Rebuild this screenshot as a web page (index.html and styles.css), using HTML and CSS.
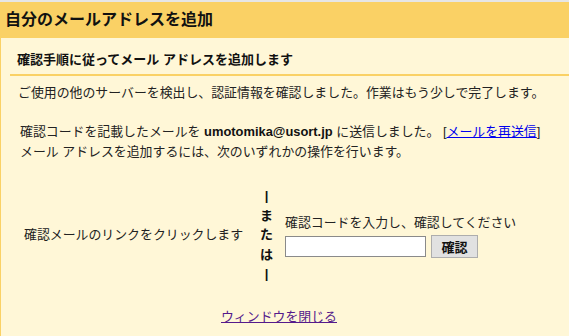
FILE: index.html
```html
<!DOCTYPE html>
<html lang="ja">
<head>
    <meta charset="UTF-8">
    <meta name="viewport" content="width=device-width, initial-scale=1.0">
    <title>自分のメールアドレスを追加</title>
    <link rel="stylesheet" href="styles.css">
</head>
<body>
    <div class="top-strip"></div>
    <div class="header">
        <h1>自分のメールアドレスを追加</h1>
    </div>

    <div class="content">
        <div class="subhead">確認手順に従ってメール アドレスを追加します</div>

        <p class="intro">ご使用の他のサーバーを検出し、認証情報を確認しました。作業はもう少しで完了します。</p>

        <div class="sent">
            <p>確認コードを記載したメールを <b>umotomika@usort.jp</b> に送信しました。 [<a href="#" class="resend">メールを再送信</a>]</p>
            <p>メール アドレスを追加するには、次のいずれかの操作を行います。</p>
        </div>

        <div class="options">
            <div class="option-link">確認メールのリンクをクリックします</div>
            <div class="or">
                <span class="bar">|</span>
                <span>ま</span>
                <span>た</span>
                <span>は</span>
                <span class="bar">|</span>
            </div>
            <div class="option-code">
                <label for="code">確認コードを入力し、確認してください</label>
                <div class="code-row">
                    <input type="text" id="code">
                    <button>確認</button>
                </div>
            </div>
        </div>

        <div class="close">
            <a href="#" class="close-link">ウィンドウを閉じる</a>
        </div>
    </div>
</body>
</html>
```

FILE: styles.css
```css
body {
    margin: 0;
    font-family: "Liberation Sans", "Noto Sans CJK JP", sans-serif;
    font-size: 12.9px;
    color: #222;
    background-color: #fff7d7;
}
.top-strip {
    height: 2px;
    background-color: #e6e6e6;
}
.header {
    height: 36px;
    background-color: #fad165;
    padding-left: 5px;
}
h1 {
    margin: 0;
    font-size: 16px;
    line-height: 36px;
    font-weight: bold;
    color: #111;
}
.content {
    border-left: 1px solid #fad165;
    min-height: 298px;
    box-sizing: border-box;
    padding-top: 12px;
}
.subhead {
    margin-left: 9px;
    padding: 0 0 4px 7px;
    line-height: 20px;
    font-size: 13px;
    font-weight: bold;
    color: #111;
    border-bottom: 2px solid #fad165;
}
.intro {
    margin: 7px 0 0;
    padding-left: 17px;
    line-height: 20px;
}
.sent {
    margin-top: 19px;
    padding-left: 19px;
}
.sent p {
    margin: 0;
    line-height: 20px;
}
.sent b {
    color: #111;
}
.resend {
    color: #0000ee;
}
.options {
    display: flex;
    align-items: center;
    margin-top: 24px;
    padding-left: 23px;
}
.option-link {
    line-height: 20px;
    width: 236px;
}
.or {
    display: flex;
    flex-direction: column;
    align-items: center;
    width: 13px;
    font-size: 13px;
    font-weight: bold;
    line-height: 19.5px;
    color: #111;
}
.option-code {
    margin-left: 12px;
    padding-top: 2px;
}
.option-code label {
    display: block;
    line-height: 18px;
    margin-bottom: 3px;
}
.code-row {
    display: flex;
    align-items: center;
    gap: 5px;
}
.code-row input {
    width: 141px;
    height: 21px;
    box-sizing: border-box;
    border: 1px solid #8a8a8a;
    background: #fff;
    margin: 0;
    padding: 1px 3px;
}
.code-row button {
    width: 47px;
    height: 23px;
    box-sizing: border-box;
    margin: 0;
    padding: 0;
    border: 1px solid #adadad;
    background-color: #e1e1e1;
    font-family: "Liberation Sans", "Noto Sans CJK JP", sans-serif;
    font-size: 13px;
    font-weight: bold;
    color: #111;
}
.close {
    margin-top: 23px;
    padding-right: 12px;
    text-align: center;
    line-height: 20px;
}
.close-link {
    color: #551a8b;
}
```
